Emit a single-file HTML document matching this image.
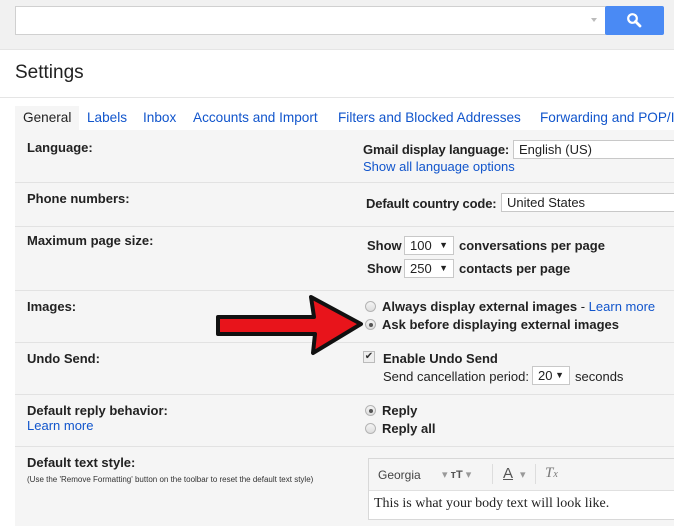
<!DOCTYPE html>
<html><head><style>
*{margin:0;padding:0;box-sizing:border-box}
body{width:674px;height:526px;overflow:hidden;background:#fff;font-family:"Liberation Sans",Arial,sans-serif;font-size:13px;color:#222;position:relative}
.a{position:absolute;white-space:nowrap}
.b{font-weight:bold}
.l{color:#15c}
.t{font-size:13.6px;top:110px}
.row{position:absolute;left:15px;width:659px;border-top:1px solid #e2e2e2}
.sel{position:absolute;background:#fff;border:1px solid #c8c8c8;height:19px;font-size:13px;padding:1px 5px}
.rad{position:absolute;width:11px;height:11px;border-radius:50%;border:1px solid #b4b4b4;background:linear-gradient(#f4f4f4,#ddd)}
.rad.on::after{content:"";position:absolute;left:2.5px;top:2.5px;width:4px;height:4px;border-radius:50%;background:#555}
</style></head><body>
<div class="a" style="left:0;top:0;width:674px;height:50px;background:#f1f1f1;border-bottom:1px solid #e5e5e5"></div>
<div class="a" style="left:15px;top:6px;width:591px;height:29px;background:#fff;border:1px solid #d0d0d0"></div>
<div class="a" style="left:591px;top:18px;width:0;height:0;border-left:3px solid transparent;border-right:3px solid transparent;border-top:4px solid #bbb"></div>
<div class="a" style="left:605px;top:6px;width:59px;height:29px;background:#4a8af4;border-radius:2px"></div>
<svg class="a" style="left:626px;top:12px" width="16" height="16" viewBox="0 0 16 16"><circle cx="6.5" cy="6.5" r="4.3" fill="none" stroke="#fff" stroke-width="2.2"/><path d="M9.5 9.5L14 14" stroke="#fff" stroke-width="2.8" stroke-linecap="round"/></svg>
<div class="a" style="left:15px;top:62px;font-size:19px;color:#222">Settings</div>
<div class="a" style="left:0;top:97px;width:674px;border-top:1px solid #e5e5e5"></div>
<div class="a" style="left:15px;top:106px;width:64px;height:24px;background:#f5f5f5"></div>
<div class="a" style="left:15px;top:130px;width:659px;height:396px;background:#f5f5f5"></div>
<div class="a t" style="left:23px">General</div>
<div class="a l t" style="left:87px">Labels</div>
<div class="a l t" style="left:143px">Inbox</div>
<div class="a l t" style="left:193px">Accounts and Import</div>
<div class="a l t" style="left:338px">Filters and Blocked Addresses</div>
<div class="a l t" style="left:540px">Forwarding and POP/IMAP</div>

<div class="row" style="top:182px"></div>
<div class="row" style="top:226px"></div>
<div class="row" style="top:290px"></div>
<div class="row" style="top:342px"></div>
<div class="row" style="top:394px"></div>
<div class="row" style="top:446px"></div>

<div class="a b" style="left:27px;top:140px">Language:</div>
<div class="a b" style="left:363px;top:142px;letter-spacing:-0.15px">Gmail display language:</div>
<div class="sel" style="left:513px;top:140px;width:170px">English (US)</div>
<div class="a l" style="left:363px;top:159px">Show all language options</div>

<div class="a b" style="left:27px;top:191px">Phone numbers:</div>
<div class="a b" style="left:366px;top:196px;letter-spacing:-0.15px">Default country code:</div>
<div class="sel" style="left:501px;top:193px;width:180px">United States</div>

<div class="a b" style="left:27px;top:233px">Maximum page size:</div>
<div class="a b" style="left:367px;top:238px">Show</div>
<div class="sel" style="left:404px;top:236px;width:50px">100<span style="position:absolute;right:5px;font-size:9px;top:3px">▼</span></div>
<div class="a b" style="left:459px;top:238px">conversations per page</div>
<div class="a b" style="left:367px;top:261px">Show</div>
<div class="sel" style="left:404px;top:259px;width:50px">250<span style="position:absolute;right:5px;font-size:9px;top:3px">▼</span></div>
<div class="a b" style="left:459px;top:261px">contacts per page</div>

<div class="a b" style="left:27px;top:299px">Images:</div>
<div class="rad" style="left:365px;top:301px"></div>
<div class="a b" style="left:382px;top:299px">Always display external images <span style="font-weight:normal">- </span><span class="l" style="font-weight:normal">Learn more</span></div>
<div class="rad on" style="left:365px;top:319px"></div>
<div class="a b" style="left:382px;top:317px">Ask before displaying external images</div>

<div class="a b" style="left:27px;top:351px">Undo Send:</div>
<div class="a" style="left:363px;top:351px;width:12px;height:12px;border:1px solid #bbb;background:#eee;font-size:10px;line-height:10px;text-align:center;color:#333">✔</div>
<div class="a b" style="left:383px;top:351px">Enable Undo Send</div>
<div class="a" style="left:383px;top:369px">Send cancellation period:</div>
<div class="sel" style="left:532px;top:366px;width:38px">20<span style="position:absolute;right:5px;font-size:9px;top:3px">▼</span></div>
<div class="a" style="left:575px;top:369px">seconds</div>

<div class="a b" style="left:27px;top:403px">Default reply behavior:</div>
<div class="a l" style="left:27px;top:418px">Learn more</div>
<div class="rad on" style="left:365px;top:405px"></div>
<div class="a b" style="left:382px;top:403px">Reply</div>
<div class="rad" style="left:365px;top:423px"></div>
<div class="a b" style="left:382px;top:421px">Reply all</div>

<div class="a b" style="left:27px;top:455px">Default text style:</div>
<div class="a" style="left:27px;top:473px;font-size:8px;line-height:14px;color:#333;white-space:normal;width:310px">(Use the 'Remove Formatting' button on the toolbar to reset the default text style)</div>
<div class="a" style="left:368px;top:458px;width:310px;height:62px;background:#fff;border:1px solid #d8d8d8"></div>
<div class="a" style="left:369px;top:459px;width:308px;height:32px;background:#f5f5f5;border-bottom:1px solid #e0e0e0"></div>
<div class="a" style="left:378px;top:468px;font-size:12px;color:#444">Georgia</div>
<div class="a" style="left:442px;top:468px;font-size:11px;color:#999">▾ <b style="color:#555">ᴛT</b> ▾</div>
<div class="a" style="left:492px;top:464px;height:20px;border-left:1px solid #ddd"></div>
<div class="a" style="left:503px;top:465px;font-size:15px;color:#555;text-decoration:underline">A</div>
<div class="a" style="left:520px;top:468px;font-size:11px;color:#999">▾</div>
<div class="a" style="left:535px;top:464px;height:20px;border-left:1px solid #ddd"></div>
<div class="a" style="left:545px;top:465px;font-size:15px;color:#777;font-style:italic;font-family:'Liberation Serif',serif">T<span style="font-size:10px">x</span></div>
<div class="a" style="left:374px;top:496px;font-family:'Liberation Serif',serif;font-size:14px;color:#222">This is what your body text will look like.</div>

<svg class="a" style="left:0;top:0" width="674" height="526" viewBox="0 0 674 526"><path d="M218 317 L314 317 L311 297 L361 324 L313 353 L315 334 L218 334 Z" fill="#e8141b" stroke="#111" stroke-width="4" stroke-linejoin="round"/></svg>
</body></html>
